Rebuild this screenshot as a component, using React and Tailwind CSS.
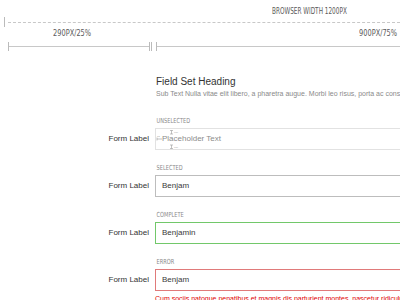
export default function App() {
  const narrow = { fontFamily: '"Liberation Sans Narrow", "DejaVu Sans Condensed", "Liberation Sans", sans-serif' };
  const sans = { fontFamily: '"Liberation Sans", Arial, sans-serif' };

  const Field = ({ caption, value, placeholder, border, error, spec }) => (
    <div className="flex flex-col">
      <div className="flex">
        <div className="w-[155px] shrink-0" />
        <div className="h-[8px] leading-[8px] text-[7px] text-[#8a8a8a] pl-[2px] mb-[3px] origin-left scale-x-[0.8] whitespace-nowrap" style={narrow}>{caption}</div>
      </div>
      <div className="flex items-center">
        <div className="w-[155px] shrink-0 pr-[6px] text-right text-[8px] text-[#333]" style={sans}>Form Label</div>
        <div className={`relative shrink-0 w-[300px] h-[22px] border ${border} flex items-center pl-[6px] text-[8px]`} style={sans}>
          {placeholder ? <span className="text-[#8c8c8c]">{placeholder}</span> : <span className="text-[#3a3a3a]">{value}</span>}
          {spec && (
            <svg className="absolute left-0 top-0" width="40" height="22" viewBox="0 0 40 22">
              <g stroke="#999" strokeWidth="0.6" fill="none">
                <path d="M14 1.5h3M15.5 1.5v3.5M14 5h3" />
                <path d="M14 16h3M15.5 16v3.5M14 19.5h3" />
                <path d="M1 8.5v3M1 10h5" />
              </g>
              <text x="18" y="4" fontSize="2.5" fill="#999">9px</text>
              <text x="18" y="19" fontSize="2.5" fill="#999">9px</text>
              <text x="1" y="8" fontSize="2.5" fill="#999">15</text>
            </svg>
          )}
        </div>
      </div>
      {error && (
        <div className="flex">
          <div className="w-[155px] shrink-0" />
          <div className="whitespace-nowrap text-[7px] leading-[9px] text-[#e00000] pt-[3px]" style={sans}>{error}</div>
        </div>
      )}
    </div>
  );

  return (
    <div className="w-[400px] h-[300px] overflow-hidden bg-white relative">
      <div className="h-[17px] pt-[8px]">
        <div className="ml-[272px] text-[8px] leading-[8px] text-[#5a5a5a] whitespace-nowrap origin-left scale-x-[0.8]" style={narrow}>BROWSER WIDTH 1200PX</div>
      </div>
      <div className="flex items-center h-[10px] pl-[4px]">
        <div className="w-px h-[10px] bg-[#bbb]" />
        <div className="flex-1 border-t border-dashed border-[#c8c8c8] ml-[3px]" />
      </div>
      <div className="flex h-[14px] items-center text-[8px] text-[#5a5a5a] whitespace-nowrap" style={narrow}>
        <div className="w-[363px] pl-[53px]"><div className="origin-left scale-x-[0.92]">290PX/25%</div></div>
        <div className="origin-left scale-x-[0.92]">900PX/75%</div>
      </div>
      <div className="flex items-center h-[10px] pl-[8px]">
        <div className="w-px h-[9px] bg-[#bbb]" />
        <div className="w-[140px] h-px bg-[#c8c8c8]" />
        <div className="w-px h-[9px] bg-[#bbb]" />
        <div className="w-[1px]" />
        <div className="w-px h-[9px] bg-[#bbb]" />
        <div className="w-[4px]" />
        <div className="w-px h-[9px] bg-[#bbb]" />
        <div className="flex-1 h-px bg-[#c8c8c8]" />
      </div>

      <div className="pl-[156px] pt-[25px] whitespace-nowrap">
        <div className="text-[10px] leading-[12px] text-[#333]" style={sans}>Field Set Heading</div>
        <div className="text-[7px] leading-[9px] text-[#8a8a8a] mt-[1px]" style={sans}>Sub Text Nulla vitae elit libero, a pharetra augue. Morbi leo risus, porta ac consectetur ac, vestibulum at eros.</div>
      </div>

      <div className="flex flex-col gap-[14px] mt-[19px]">
        <Field caption="UNSELECTED" placeholder="Placeholder Text" border="border-[#e2e2e2]" spec />
        <Field caption="SELECTED" value="Benjam" border="border-[#bdbdbd]" />
        <Field caption="COMPLETE" value="Benjamin" border="border-[#72c86a]" />
        <Field caption="ERROR" value="Benjam" border="border-[#e07a7a]" error="Cum sociis natoque penatibus et magnis dis parturient montes, nascetur ridiculus mus." />
      </div>
    </div>
  );
}
